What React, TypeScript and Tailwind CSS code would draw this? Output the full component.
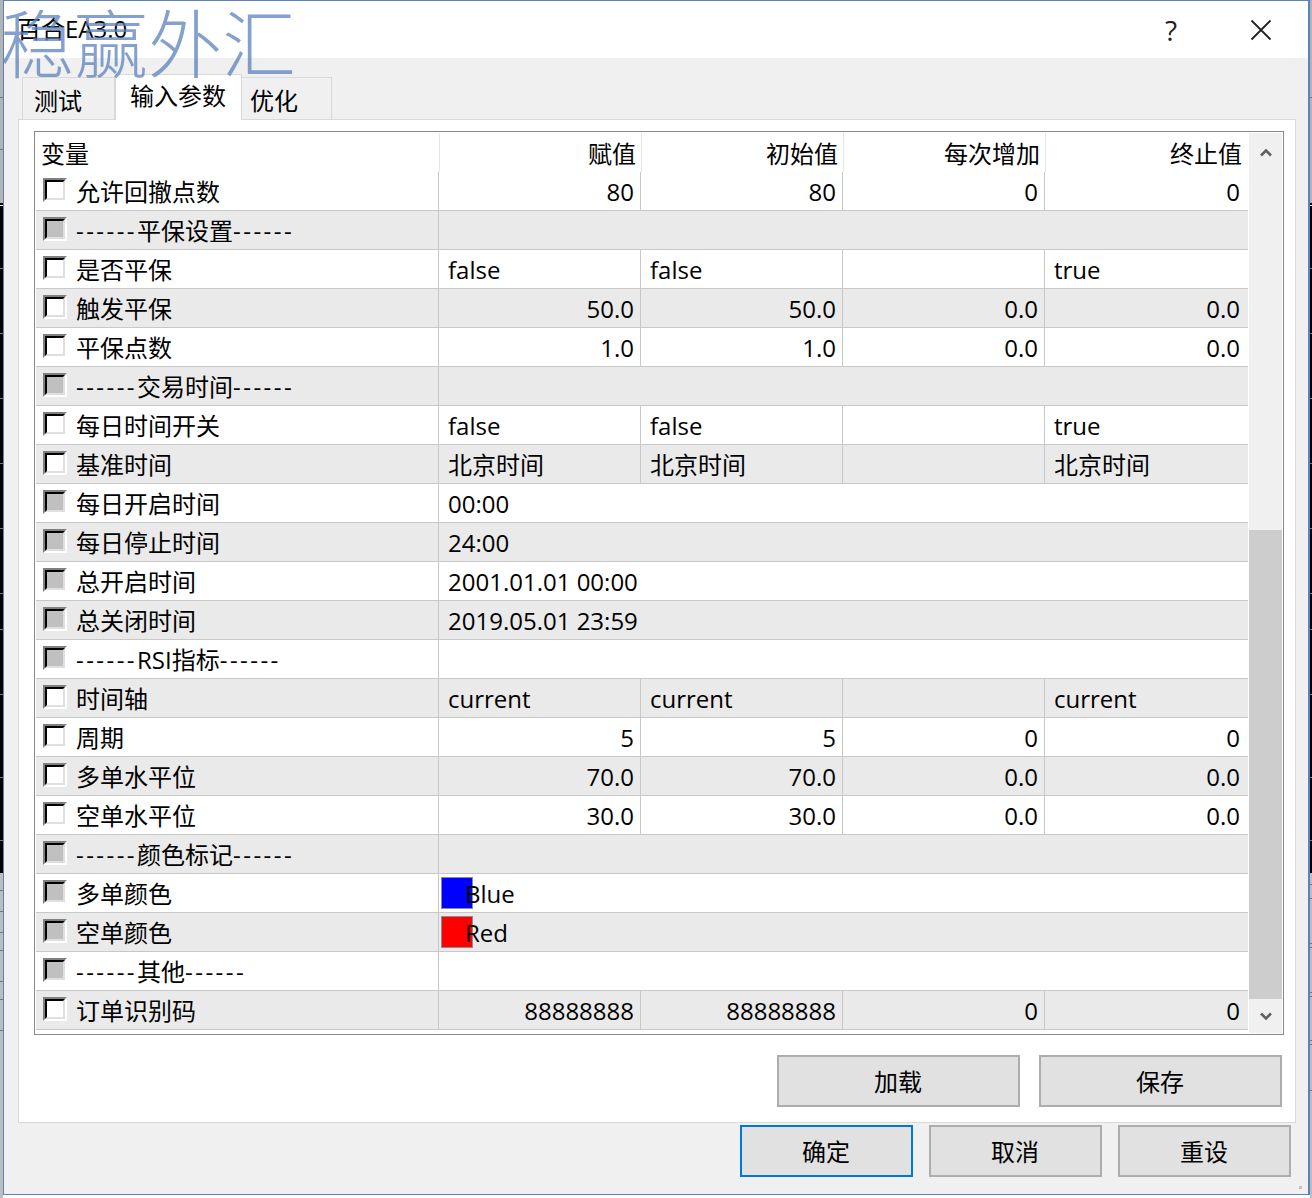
import React from "react";

type Row = {
  name: string;
  cells?: string[];
  span?: string;
  swatch?: string;
  disabled?: boolean;
};

const rows: Row[] = [
  { name: "允许回撤点数", cells: ["80", "80", "0", "0"] },
  { name: "------平保设置------", disabled: true, span: "" },
  { name: "是否平保", cells: ["false", "false", "", "true"] },
  { name: "触发平保", cells: ["50.0", "50.0", "0.0", "0.0"] },
  { name: "平保点数", cells: ["1.0", "1.0", "0.0", "0.0"] },
  { name: "------交易时间------", disabled: true, span: "" },
  { name: "每日时间开关", cells: ["false", "false", "", "true"] },
  { name: "基准时间", cells: ["北京时间", "北京时间", "", "北京时间"] },
  { name: "每日开启时间", disabled: true, span: "00:00" },
  { name: "每日停止时间", disabled: true, span: "24:00" },
  { name: "总开启时间", disabled: true, span: "2001.01.01 00:00" },
  { name: "总关闭时间", disabled: true, span: "2019.05.01 23:59" },
  { name: "------RSI指标------", disabled: true, span: "" },
  { name: "时间轴", cells: ["current", "current", "", "current"] },
  { name: "周期", cells: ["5", "5", "0", "0"] },
  { name: "多单水平位", cells: ["70.0", "70.0", "0.0", "0.0"] },
  { name: "空单水平位", cells: ["30.0", "30.0", "0.0", "0.0"] },
  { name: "------颜色标记------", disabled: true, span: "" },
  { name: "多单颜色", disabled: true, span: "Blue", swatch: "bg-[#0000ff]" },
  { name: "空单颜色", disabled: true, span: "Red", swatch: "bg-[#ff0000]" },
  { name: "------其他------", disabled: true, span: "" },
  { name: "订单识别码", cells: ["88888888", "88888888", "0", "0"] },
];

const leftTicks = [97, 149, 268, 333, 398, 463, 528, 593, 629, 694, 777, 840, 890, 911, 932, 950, 981, 999, 1030];
const rightTicks = [97, 268, 333, 398, 463, 528, 593, 629, 694, 777, 840, 884, 898, 943, 947, 992, 996, 1040, 1044, 1090];

// the chart behind the dialog, only a few pixels of it show
const Backdrop = ({ ticks, className }: { ticks: number[]; className: string }) => (
  <div className={"relative flex flex-col h-[1198px] shrink-0 " + className}>
    <div className="h-[203px] bg-[#b4b4b4]" />
    <div className="h-[670px] bg-black" />
    <div className="flex-1 bg-[#bdbdbd]" />
    <div className="absolute left-0 right-0 top-[205px] h-px bg-white" />
    {ticks.map((t) => (
      <div
        key={t}
        className="absolute left-0 right-0 h-px bg-[#777777]"
        style={{ top: t }}
      />
    ))}
  </div>
);

const Check = ({ disabled }: { disabled?: boolean }) => (
  <div className="w-6 h-6 shrink-0 mb-[2px] border-2 border-t-[#808080] border-l-[#808080] border-r-white border-b-white">
    <div
      className={
        "w-5 h-5 border-2 border-t-black border-l-black border-r-[#dfdfdf] border-b-[#dfdfdf] " +
        (disabled ? "bg-[#c0c0c0]" : "bg-white")
      }
    />
  </div>
);

// the dashes in the section names are wider in the original font
const Name = ({ text }: { text: string }) => (
  <span className="ml-[9px] pt-[2px]">
    {text.split(/(-+)/).map((part, i) =>
      part.startsWith("-") ? (
        <span key={i} className="tracking-[2.45px]">
          {part}
        </span>
      ) : (
        part
      )
    )}
  </span>
);

const Cell = ({ value, last }: { value: string; last?: boolean }) => {
  const isNum = /^[0-9.]+$/.test(value);
  return (
    <div
      className={
        "flex items-center pt-[2px] " +
        (last ? "" : "border-r border-[#c8c8c8] ") +
        (isNum ? (last ? "justify-end pr-[8px]" : "justify-end pr-[6px]") : "pl-[9px]")
      }
    >
      {value}
    </div>
  );
};

const TableRow = ({ row, index }: { row: Row; index: number }) => (
  <div
    className={
      "grid grid-cols-[403px_202px_202px_202px_203px] h-[39px] border-b border-[#c8c8c8] " +
      (index % 2 === 0 ? "bg-white" : "bg-[#eaeaea]")
    }
  >
    <div className="flex items-center pl-[7px] border-r border-[#c8c8c8]">
      <Check disabled={row.disabled} />
      <Name text={row.name} />
    </div>
    {row.cells ? (
      row.cells.map((c, i) => <Cell key={i} value={c} last={i === 3} />)
    ) : (
      <div className="col-span-4 relative flex items-center pl-[9px] pt-[2px]">
        {row.swatch && (
          <div
            className={
              "absolute left-[2px] top-[3px] w-8 h-8 border border-[#8a8a9a] " + row.swatch
            }
          />
        )}
        <span className={"relative " + (row.swatch ? "ml-[17px]" : "")}>{row.span}</span>
      </div>
    )}
  </div>
);

const HeaderCell = ({ label, last }: { label: string; last?: boolean }) => (
  <div
    className={
      "flex items-center justify-end pt-[2px] border-l border-[#e6e6e6] " +
      (last ? "pr-[6px]" : "pr-[5px]")
    }
  >
    {label}
  </div>
);

const Button = ({ label, width, primary }: { label: string; width: string; primary?: boolean }) => (
  <button
    className={
      "h-[52px] bg-[#e1e1e1] border-2 pt-[2px] pr-[1px] " +
      width +
      (primary ? " border-[#0078d7]" : " border-[#adadad]")
    }
  >
    {label}
  </button>
);

const Scrollbar = () => (
  <div className="ml-px mt-px w-[33px] h-[900px] bg-[#f0f0f0] flex flex-col">
    <div className="h-[397px] flex justify-center pt-[15px]">
      <svg width="12" height="9" viewBox="0 0 12 9" fill="none">
        <path d="M1 7.5 L6 2.5 L11 7.5" stroke="#606060" strokeWidth="2.6" />
      </svg>
    </div>
    <div className="h-[469px] bg-[#cdcdcd]" />
    <div className="flex justify-center pt-[13px]">
      <svg width="12" height="9" viewBox="0 0 12 9" fill="none">
        <path d="M1 1.5 L6 6.5 L11 1.5" stroke="#606060" strokeWidth="2.6" />
      </svg>
    </div>
  </div>
);

export default function App() {
  return (
    <div className="relative w-[1312px] h-[1198px] overflow-hidden flex text-[24px] text-black bg-white font-['Open_Sans','Noto_Sans_CJK_SC',sans-serif]">
      <Backdrop ticks={leftTicks} className="w-[3px]" />

      <div className="w-[1307px] h-[1195px] shrink-0 flex flex-col border-l border-t border-b border-r-2 border-[#5b82bb] bg-[#f0f0f0]">
        <div className="h-[57px] shrink-0 bg-white flex items-center justify-between">
          <span className="ml-[13px] -mt-[2px]">百合EA3.0</span>
          <div className="flex items-center">
            <span className="text-[#222222] text-[28px]">?</span>
            <svg width="22" height="22" viewBox="0 0 22 22" className="ml-[73px] mr-[36px]" fill="none">
              <path d="M1.5 1.5 L20.5 20.5 M20.5 1.5 L1.5 20.5" stroke="#222222" strokeWidth="1.8" />
            </svg>
          </div>
        </div>

        <div className="h-[16px] shrink-0" />
        <div className="flex h-[45px] shrink-0 ml-[18px] items-end">
          <div className="w-[93px] h-[42px] border border-b-0 border-[#d9d9d9] pl-[11px] pt-[5px] leading-[36px]">测试</div>
          <div className="w-[127px] h-[46px] -mb-px relative z-10 bg-white border-t border-x border-[#d9d9d9] pl-[14px] pt-[3px] leading-[36px]">输入参数</div>
          <div className="w-[90px] h-[42px] border border-b-0 border-l-0 border-[#d9d9d9] pl-[8px] pt-[5px] leading-[36px]">优化</div>
        </div>

        <div className="ml-[14px] w-[1278px] h-[1004px] shrink-0 bg-white border border-[#d9d9d9] pt-[11px] pl-[15px]">
          <div className="w-[1250px] h-[904px] border border-[#8a8a8a] pl-px flex">
            <div className="w-[1212px]">
              <div className="mt-px h-[39px] grid grid-cols-[403px_202px_202px_202px_203px]">
                <div className="flex items-center pl-[5px] pt-[2px]">变量</div>
                <HeaderCell label="赋值" />
                <HeaderCell label="初始值" />
                <HeaderCell label="每次增加" />
                <HeaderCell label="终止值" last />
              </div>
              {rows.map((row, i) => (
                <TableRow key={i} row={row} index={i} />
              ))}
            </div>
            <Scrollbar />
          </div>

          <div className="flex justify-end gap-[19px] mt-[20px] mr-[13px]">
            <Button label="加载" width="w-[243px]" />
            <Button label="保存" width="w-[243px]" />
          </div>
        </div>

        <div className="flex justify-end gap-[16px] mt-[2px] mr-[17px]">
          <Button label="确定" width="w-[173px]" primary />
          <Button label="取消" width="w-[173px]" />
          <Button label="重设" width="w-[173px]" />
        </div>
        <div className="flex justify-end mt-[9px] mr-[6px]">
          <div className="w-[3px] h-[3px] bg-[#c4c4c4]" />
        </div>
      </div>

      <Backdrop ticks={rightTicks} className="w-[2px]" />

      <div className="absolute z-20 left-0 top-[2px] text-[74px] leading-[84px] font-light whitespace-nowrap text-[#5b80bd]/75 pointer-events-none">
        稳赢外汇
      </div>
    </div>
  );
}
